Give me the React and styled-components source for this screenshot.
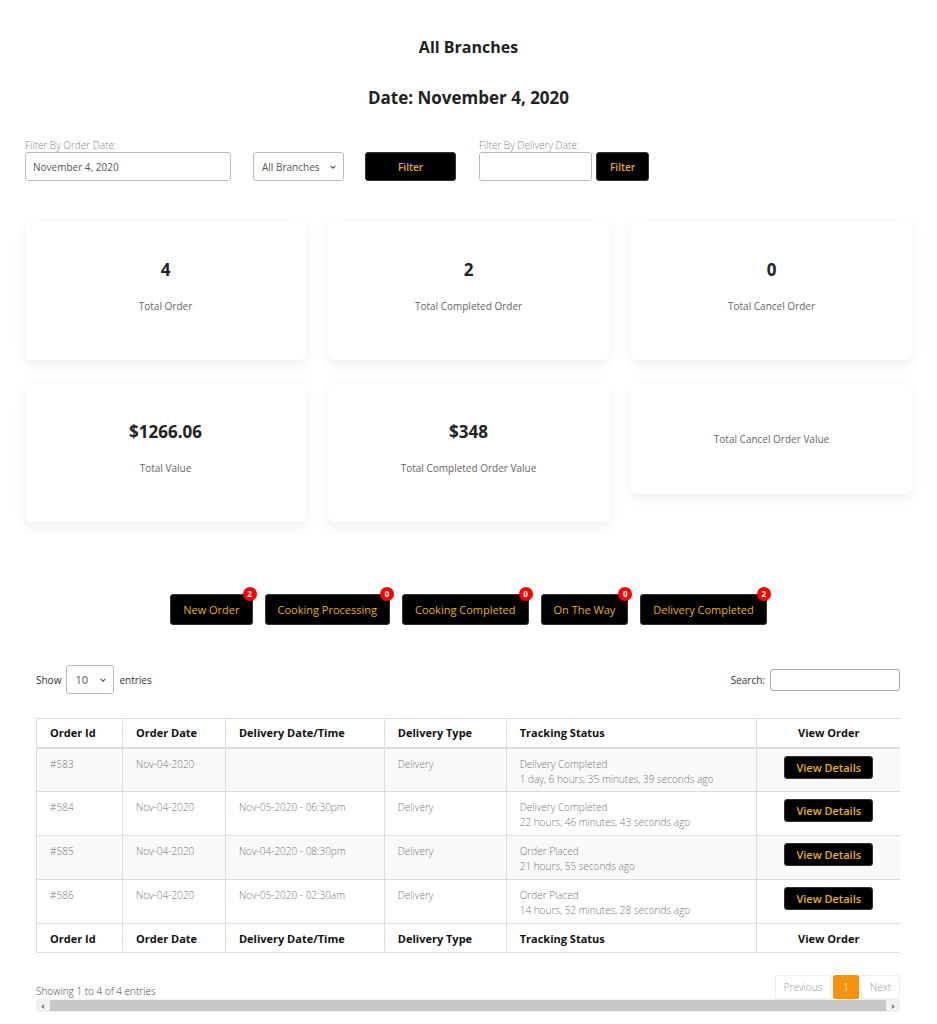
import React from "react"
import styled, { createGlobalStyle } from "styled-components"

const GlobalStyle = createGlobalStyle`
  body {
    margin: 0;
    background: #fff;
    font-family: "Open Sans", "Liberation Sans", sans-serif;
    color: #222;
  }
`

const Page = styled.div`
  width: 937px;
  padding: 36px 0 0;
  box-sizing: border-box;
`

const Title = styled.h2`
  margin: 0;
  text-align: center;
  font-size: 16px;
  font-weight: 700;
  line-height: 22px;
  color: #222;
`

const DateTitle = styled.h2`
  margin: 28px 0 0;
  text-align: center;
  font-size: 17px;
  font-weight: 700;
  line-height: 24px;
  color: #222;
`

const FilterBar = styled.div`
  display: flex;
  align-items: flex-end;
  margin: 29px 0 0 25px;
`

const Field = styled.div`
  display: flex;
  flex-direction: column;
  margin-right: ${(p) => p.gap || 0}px;
`

const Label = styled.label`
  font-size: 10px;
  font-weight: 300;
  color: #888;
  line-height: 12px;
  margin-bottom: 1px;
`

const TextInput = styled.div`
  width: ${(p) => p.w}px;
  height: 29px;
  box-sizing: border-box;
  border: 1px solid #bbb;
  border-radius: 3px;
  padding: 0 7px;
  display: flex;
  align-items: center;
  font-size: 10px;
  color: #555;
  background: #fff;
`

const Select = styled.div`
  width: ${(p) => p.w}px;
  height: ${(p) => p.h || 29}px;
  box-sizing: border-box;
  border: 1px solid #bbb;
  border-radius: 3px;
  padding: 0 6px 0 8px;
  display: flex;
  align-items: center;
  justify-content: space-between;
  font-size: ${(p) => p.fs || 10}px;
  color: #555;
  margin-right: ${(p) => p.mr || 0}px;
  background: #fff;
`

const Chevron = () => (
  <svg width="8" height="8" viewBox="0 0 10 10">
    <path d="M2 3.5 L5 6.5 L8 3.5" fill="none" stroke="#555" strokeWidth="1.4" />
  </svg>
)

const BlackButton = styled.button`
  width: ${(p) => p.w}px;
  height: 29px;
  margin-right: ${(p) => p.mr || 0}px;
  background: #000;
  border: 1px solid #333;
  border-radius: 3px;
  color: #e5b20a;
  font-family: inherit;
  font-size: 10px;
  font-weight: 600;
  cursor: pointer;
`

const CardGrid = styled.div`
  display: grid;
  grid-template-columns: repeat(3, 281px);
  column-gap: 22px;
  row-gap: 24px;
  align-items: start;
  margin: 41px 0 0 25px;
`

const Card = styled.div`
  height: ${(p) => p.h}px;
  background: #fff;
  border-radius: 6px;
  box-shadow: 0 4px 14px rgba(0, 0, 0, 0.07);
  display: flex;
  flex-direction: column;
  align-items: center;
  justify-content: center;
  gap: 18px;
`

const CardValue = styled.div`
  font-size: 17px;
  font-weight: 700;
  color: #222;
  line-height: 22px;
  margin-top: -10px;
`

const CardLabel = styled.div`
  font-size: 10px;
  color: #666;
  line-height: 14px;
`

const StatusBar = styled.div`
  display: flex;
  justify-content: center;
  gap: 12px;
  margin: 72px 0 0 0;
`

const StatusButton = styled.button`
  position: relative;
  height: 31px;
  padding: 0 12px;
  background: #000;
  border: 1px solid #333;
  border-radius: 3px;
  color: #e5b20a;
  font-family: inherit;
  font-size: 11px;
  font-weight: 500;
  cursor: pointer;
`

const Badge = styled.span`
  position: absolute;
  top: -8px;
  right: -5px;
  width: 14px;
  height: 14px;
  border-radius: 50%;
  background: #f00;
  color: #fff;
  font-size: 8px;
  font-weight: 700;
  line-height: 14px;
  text-align: center;
`

const TableArea = styled.div`
  margin: 40px 37px 0 36px;
`

const Controls = styled.div`
  display: flex;
  justify-content: space-between;
  align-items: center;
  font-size: 10px;
  color: #333;
`

const Inline = styled.div`
  display: flex;
  align-items: center;
  gap: 5px;
`

const SearchBox = styled.div`
  width: 130px;
  height: 22px;
  box-sizing: border-box;
  border: 1px solid #aaa;
  border-radius: 3px;
`

const Table = styled.table`
  width: 100%;
  margin-top: 24px;
  border-collapse: collapse;
  border-top: 1px solid #ddd;
  border-left: 1px solid #ddd;
`

const Th = styled.th`
  height: 29px;
  box-sizing: border-box;
  padding: 0 13px;
  font-size: 11px;
  font-weight: 700;
  color: #111;
  text-align: ${(p) => (p.center ? "center" : "left")};
  width: ${(p) => p.w}px;
  border-right: ${(p) => (p.last ? "none" : "1px solid #ddd")};
  border-bottom: 2px solid #ddd;
`

const Tr = styled.tr`
  background: ${(p) => (p.odd ? "#f9f9f9" : "#fff")};
`

const Td = styled.td`
  height: 44px;
  box-sizing: border-box;
  padding: 8px 13px 0;
  vertical-align: top;
  font-size: 10px;
  font-weight: 300;
  color: #777;
  line-height: 15px;
  text-align: ${(p) => (p.center ? "center" : "left")};
  border-right: ${(p) => (p.last ? "none" : "1px solid #ddd")};
  border-bottom: 1px solid #ddd;
`

const FootTh = styled(Th)`
  border-bottom: 1px solid #ddd;
  border-top: 1px solid #ddd;
`

const DetailsButton = styled.button`
  width: 89px;
  height: 23px;
  margin-top: -1px;
  background: #000;
  border: 1px solid #333;
  border-radius: 3px;
  color: #e5b20a;
  font-family: inherit;
  font-size: 11px;
  font-weight: 600;
  cursor: pointer;
`

const InfoRow = styled.div`
  display: flex;
  justify-content: space-between;
  align-items: flex-end;
  margin-top: 22px;
`

const Info = styled.div`
  font-size: 10px;
  font-weight: 300;
  color: #444;
  line-height: 12px;
  padding-bottom: 2px;
`

const Pager = styled.div`
  display: flex;
  gap: 2px;
`

const PageBtn = styled.div`
  height: 24px;
  padding: 0 ${(p) => (p.active ? 9 : 8)}px;
  box-sizing: border-box;
  display: flex;
  align-items: center;
  font-size: 10px;
  font-weight: 300;
  border-radius: 2px;
  border: 1px solid ${(p) => (p.active ? "#f7930a" : "#eee")};
  background: ${(p) => (p.active ? "#f7930a" : "#fff")};
  color: ${(p) => (p.active ? "#fff" : "#999")};
`

const ScrollTrack = styled.div`
  display: flex;
  align-items: center;
  height: 13px;
  background: #f1f1f1;
  font-size: 9px;
  color: #555;
`

const ScrollArrow = styled.span`
  width: 14px;
  text-align: center;
  font-weight: 700;
`

const ScrollThumb = styled.div`
  flex: 1;
  height: 11px;
  background: #c8c8c8;
`

const cards = [
  { value: "4", label: "Total Order", h: 138 },
  { value: "2", label: "Total Completed Order", h: 138 },
  { value: "0", label: "Total Cancel Order", h: 138 },
  { value: "$1266.06", label: "Total Value", h: 138 },
  { value: "$348", label: "Total Completed Order Value", h: 138 },
  { value: null, label: "Total Cancel Order Value", h: 110 },
]

const statuses = [
  ["New Order", 2],
  ["Cooking Processing", 0],
  ["Cooking Completed", 0],
  ["On The Way", 0],
  ["Delivery Completed", 2],
]

const orders = [
  ["#583", "Nov-04-2020", "", "Delivery", "Delivery Completed", "1 day, 6 hours, 35 minutes, 39 seconds ago"],
  ["#584", "Nov-04-2020", "Nov-05-2020 - 06:30pm", "Delivery", "Delivery Completed", "22 hours, 46 minutes, 43 seconds ago"],
  ["#585", "Nov-04-2020", "Nov-04-2020 - 08:30pm", "Delivery", "Order Placed", "21 hours, 55 seconds ago"],
  ["#586", "Nov-04-2020", "Nov-05-2020 - 02:30am", "Delivery", "Order Placed", "14 hours, 52 minutes, 28 seconds ago"],
]

const columns = [
  ["Order Id", 86],
  ["Order Date", 103],
  ["Delivery Date/Time", 159],
  ["Delivery Type", 122],
  ["Tracking Status", 251],
  ["View Order", 143],
]

function HeaderCells({ Cell }) {
  return columns.map(([name, w], i) => (
    <Cell key={name} w={w} center={i === 5} last={i === 5}>
      {name}
    </Cell>
  ))
}

export default function App() {
  return (
    <Page>
      <GlobalStyle />
      <Title>All Branches</Title>
      <DateTitle>Date: November 4, 2020</DateTitle>

      <FilterBar>
        <Field gap={22}>
          <Label>Filter By Order Date:</Label>
          <TextInput w={206}>November 4, 2020</TextInput>
        </Field>
        <Select w={91} mr={21}>
          All Branches <Chevron />
        </Select>
        <BlackButton w={91} mr={23}>Filter</BlackButton>
        <Field gap={4}>
          <Label>Filter By Delivery Date:</Label>
          <TextInput w={113} />
        </Field>
        <BlackButton w={53}>Filter</BlackButton>
      </FilterBar>

      <CardGrid>
        {cards.map((c) => (
          <Card key={c.label} h={c.h}>
            {c.value && <CardValue>{c.value}</CardValue>}
            <CardLabel>{c.label}</CardLabel>
          </Card>
        ))}
      </CardGrid>

      <StatusBar>
        {statuses.map(([name, n]) => (
          <StatusButton key={name}>
            {name}
            <Badge>{n}</Badge>
          </StatusButton>
        ))}
      </StatusBar>

      <TableArea>
        <Controls>
          <Inline>
            Show
            <Select w={48} h={29} fs={11}>
              10 <Chevron />
            </Select>
            entries
          </Inline>
          <Inline>
            Search:
            <SearchBox />
          </Inline>
        </Controls>

        <Table>
          <thead>
            <tr>
              <HeaderCells Cell={Th} />
            </tr>
          </thead>
          <tbody>
            {orders.map((o, i) => (
              <Tr key={o[0]} odd={i % 2 === 0}>
                <Td>{o[0]}</Td>
                <Td>{o[1]}</Td>
                <Td>{o[2]}</Td>
                <Td>{o[3]}</Td>
                <Td>
                  {o[4]}
                  <br />
                  {o[5]}
                </Td>
                <Td center last>
                  <DetailsButton>View Details</DetailsButton>
                </Td>
              </Tr>
            ))}
          </tbody>
          <tfoot>
            <tr>
              <HeaderCells Cell={FootTh} />
            </tr>
          </tfoot>
        </Table>

        <InfoRow>
          <Info>Showing 1 to 4 of 4 entries</Info>
          <Pager>
            <PageBtn>Previous</PageBtn>
            <PageBtn active>1</PageBtn>
            <PageBtn>Next</PageBtn>
          </Pager>
        </InfoRow>
        <ScrollTrack>
          <ScrollArrow>‹</ScrollArrow>
          <ScrollThumb />
          <ScrollArrow>›</ScrollArrow>
        </ScrollTrack>
      </TableArea>
    </Page>
  )
}
